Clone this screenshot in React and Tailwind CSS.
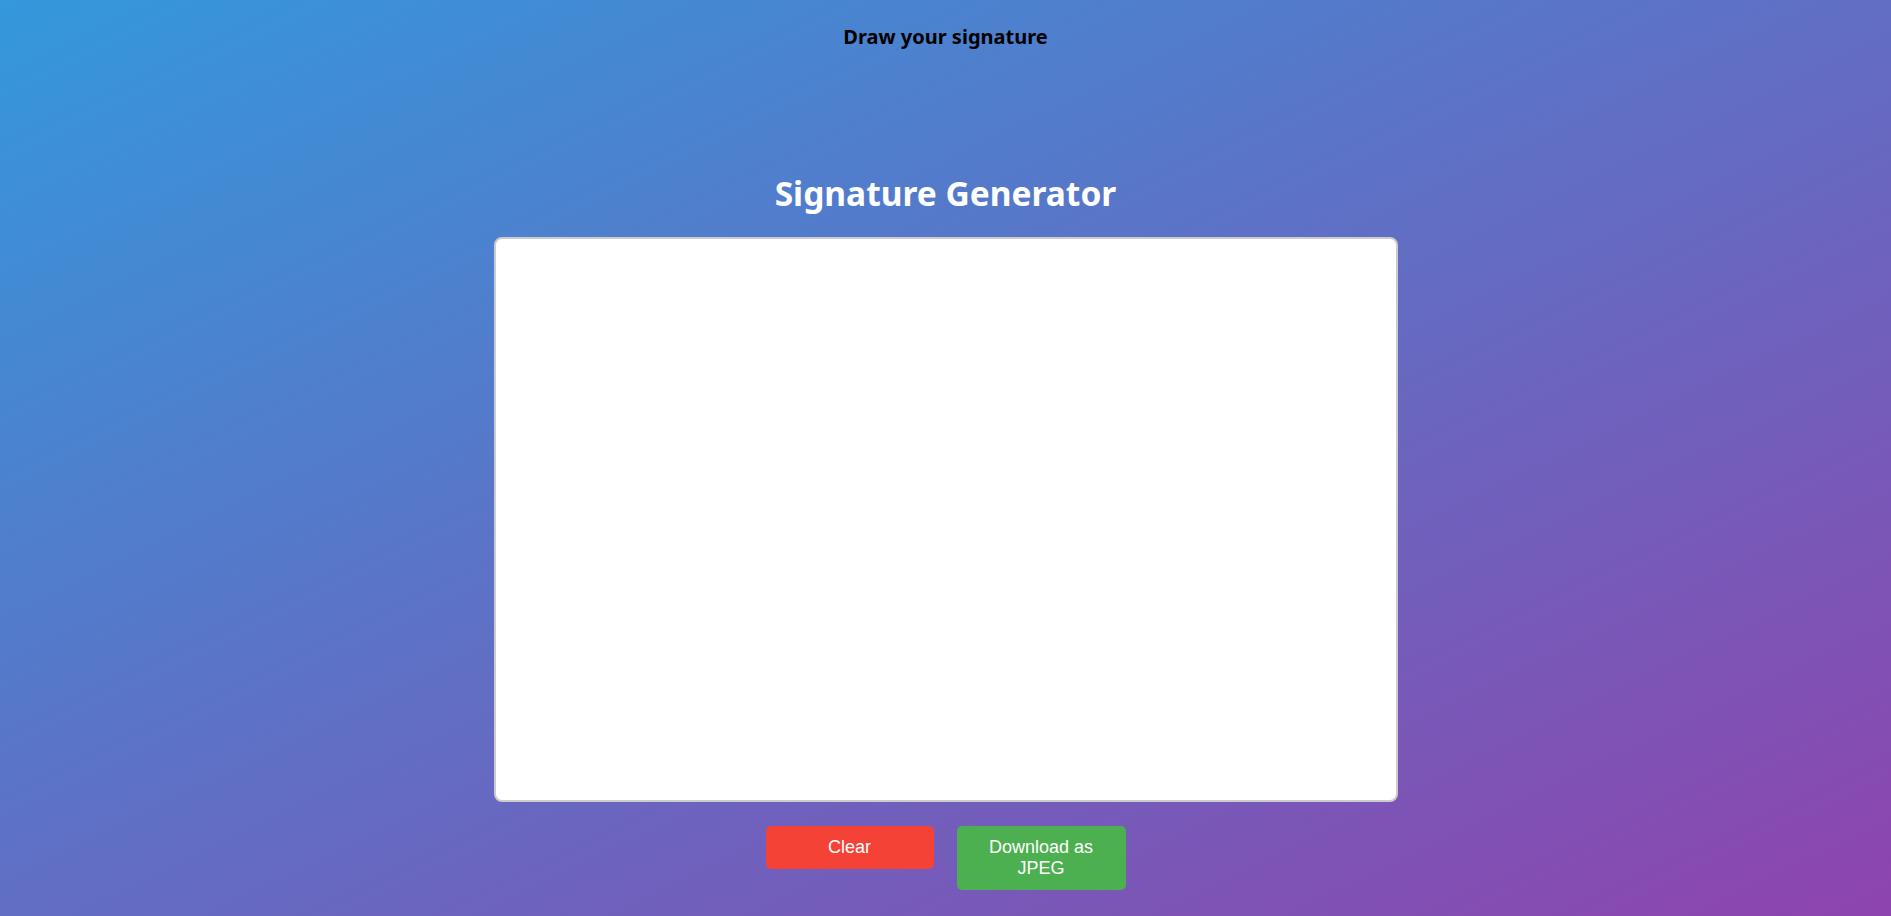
import React from 'react';

export default function App() {
  return (
    <div
      className="min-h-[916px] w-full flex flex-col items-center bg-[linear-gradient(to_bottom_right,#3498db,#8e44ad)]"
      style={{ fontFamily: '"Noto Sans", "Open Sans", sans-serif' }}
    >
      {/* Header */}
      <p className="pt-[25px] text-[20px] leading-[24px] font-bold text-black">Draw your signature</p>

      <h1 className="mt-[122px] text-[33.5px] leading-[44px] font-bold text-white">Signature Generator</h1>

      {/* Canvas */}
      <div className="mt-[22px] w-[904px] h-[565px] bg-white border-2 border-[#cccccc] rounded-[8px]" />

      {/* Actions */}
      <div
        className="mt-[24px] flex items-start gap-[23px]"
        style={{ fontFamily: '"Liberation Sans", Arial, sans-serif' }}
      >
        <button className="w-[168px] py-[11px] bg-[#f44336] text-white text-[18px] leading-[21px] rounded-[5px]">
          Clear
        </button>
        <button className="w-[169px] py-[11px] px-[20px] bg-[#4caf50] text-white text-[18px] leading-[21px] rounded-[5px]">
          Download as JPEG
        </button>
      </div>
    </div>
  );
}
